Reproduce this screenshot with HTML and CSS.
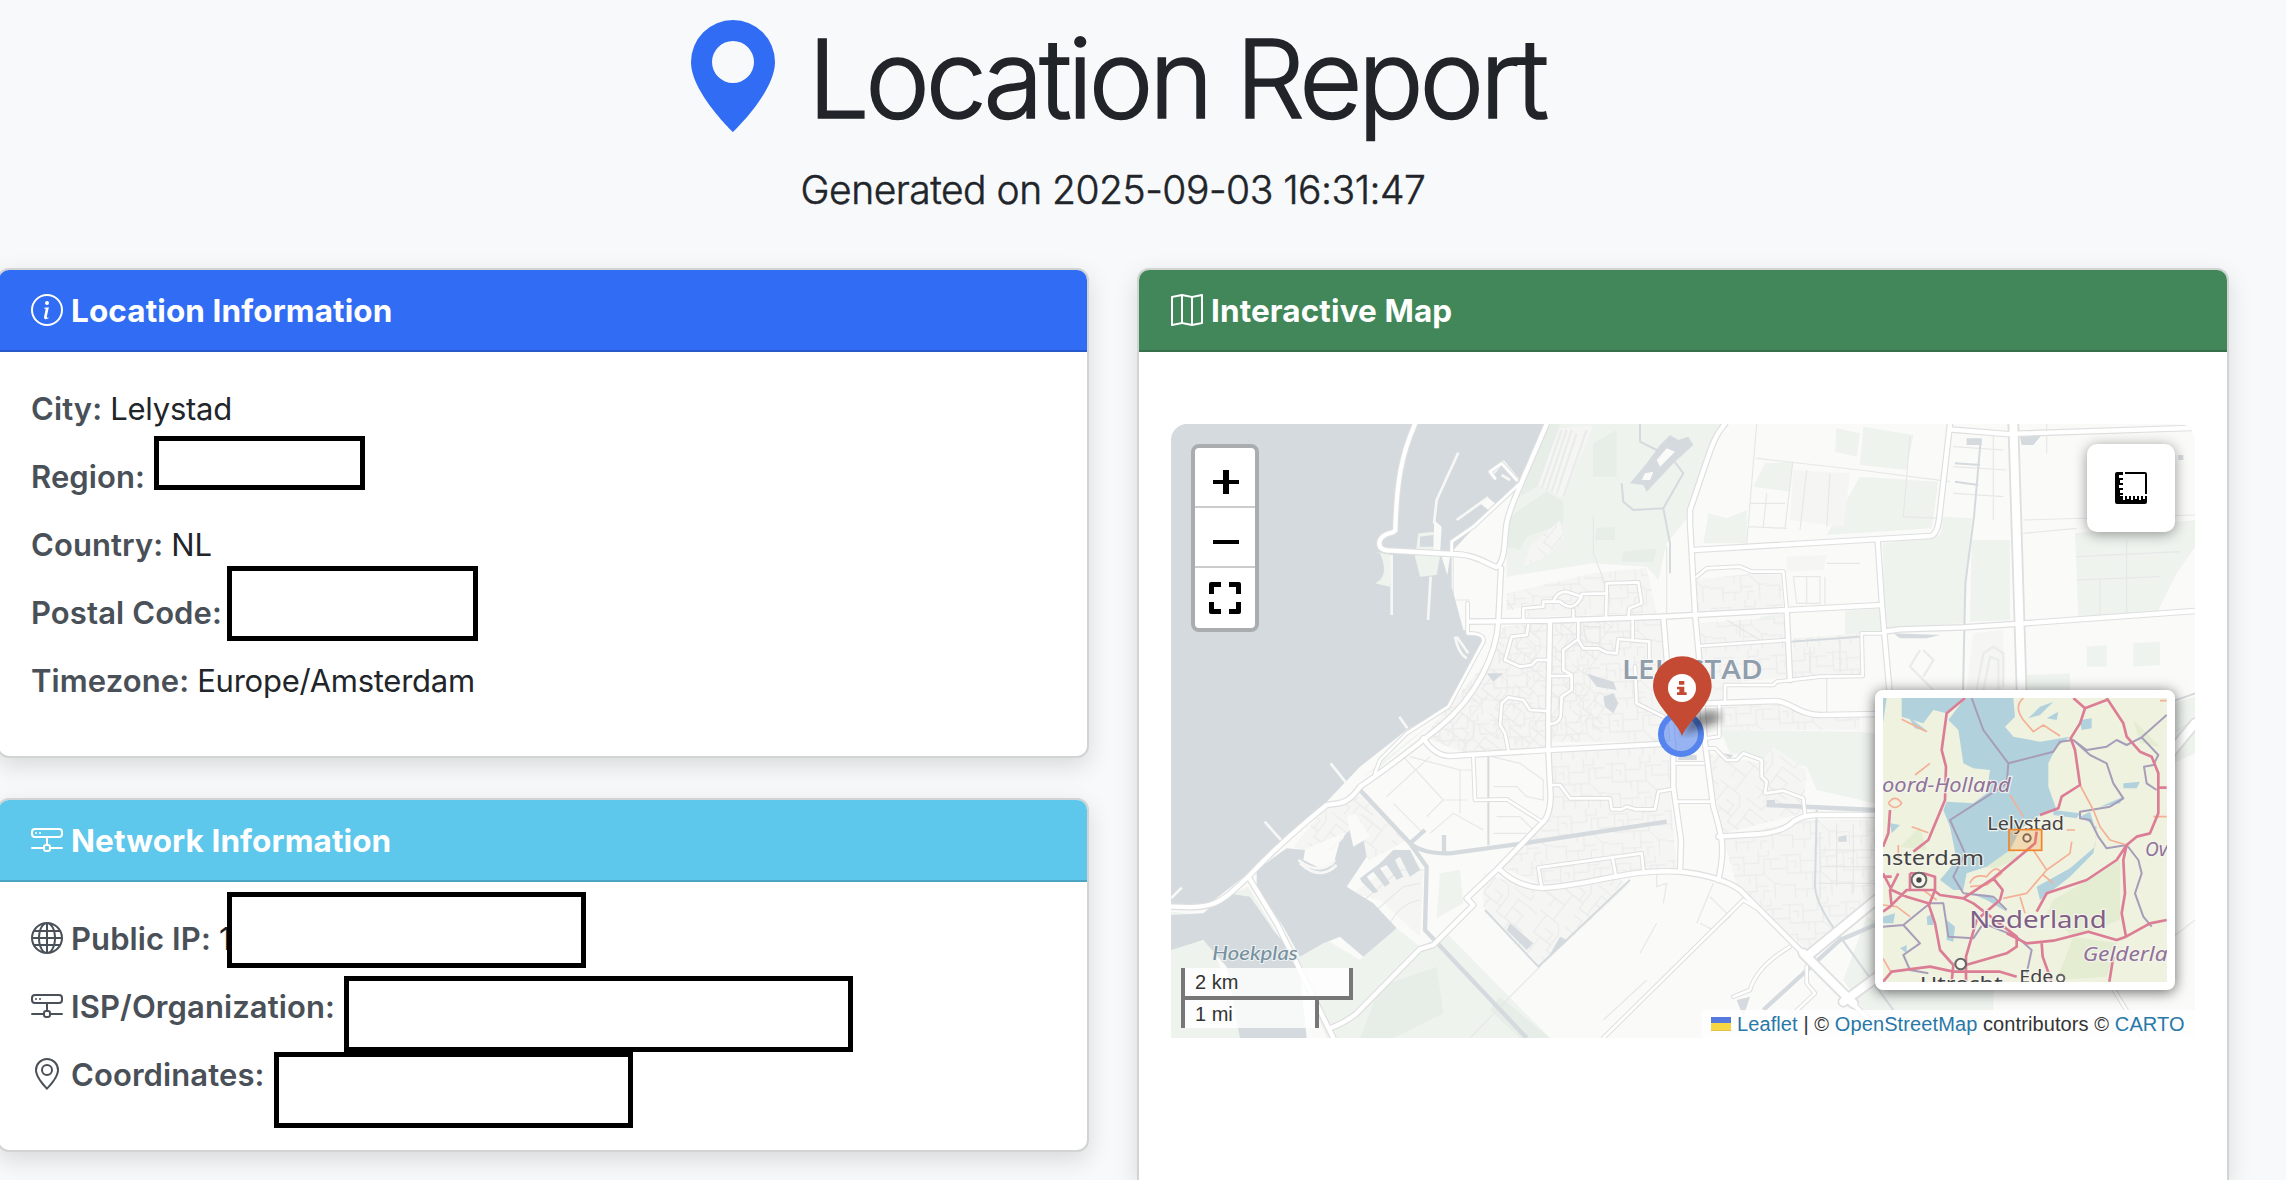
FILE: index.html
```html
<!DOCTYPE html>
<html lang="en">
<head>
<meta charset="utf-8">
<title>Location Report</title>
<link rel="stylesheet" href="styles.css">
</head>
<body>
<svg class="sprite" width="0" height="0" aria-hidden="true">
  <symbol id="i-pin-fill" viewBox="0 0 16 16"><path d="M8 16s6-5.686 6-10A6 6 0 0 0 2 6c0 4.314 6 10 6 10m0-7a3 3 0 1 1 0-6 3 3 0 0 1 0 6"/></symbol>
  <symbol id="i-info" viewBox="0 0 16 16"><path d="M8 15A7 7 0 1 1 8 1a7 7 0 0 1 0 14m0 1A8 8 0 1 0 8 0a8 8 0 0 0 0 16"/><path d="m8.93 6.588-2.29.287-.082.38.45.083c.294.07.352.176.288.469l-.738 3.468c-.194.897.105 1.319.808 1.319.545 0 1.178-.252 1.465-.598l.088-.416c-.2.176-.492.246-.686.246-.275 0-.375-.193-.304-.533zM9 4.5a1 1 0 1 1-2 0 1 1 0 0 1 2 0"/></symbol>
  <symbol id="i-net" viewBox="0 0 16 16"><path d="M4.5 5a.5.5 0 1 0 0-1 .5.5 0 0 0 0 1M3 4.5a.5.5 0 1 1-1 0 .5.5 0 0 1 1 0"/><path d="M0 4a2 2 0 0 1 2-2h12a2 2 0 0 1 2 2v1a2 2 0 0 1-2 2H8.5v3a1.5 1.5 0 0 1 1.5 1.5h5.5a.5.5 0 0 1 0 1H10A1.5 1.5 0 0 1 8.5 14h-1A1.5 1.5 0 0 1 6 12.5H.5a.5.5 0 0 1 0-1H6A1.5 1.5 0 0 1 7.5 10V7H2a2 2 0 0 1-2-2zm1 0v1a1 1 0 0 0 1 1h12a1 1 0 0 0 1-1V4a1 1 0 0 0-1-1H2a1 1 0 0 0-1 1m6 7.5v1a.5.5 0 0 0 .5.5h1a.5.5 0 0 0 .5-.5v-1a.5.5 0 0 0-.5-.5h-1a.5.5 0 0 0-.5.5"/></symbol>
  <symbol id="i-globe" viewBox="0 0 16 16"><path d="M0 8a8 8 0 1 1 16 0A8 8 0 0 1 0 8m7.5-6.923c-.67.204-1.335.82-1.887 1.855A8 8 0 0 0 5.145 4H7.5zM4.09 4a9.3 9.3 0 0 1 .64-1.539 7 7 0 0 1 .597-.933A7.03 7.03 0 0 0 2.255 4zm-.582 3.5c.03-.877.138-1.718.312-2.5H1.674a7 7 0 0 0-.656 2.5zM4.847 5a12.5 12.5 0 0 0-.338 2.5H7.5V5zM8.5 5v2.5h2.99a12.5 12.5 0 0 0-.337-2.5zM4.51 8.5a12.5 12.5 0 0 0 .337 2.5H7.5V8.5zm3.99 0V11h2.653c.187-.765.306-1.608.338-2.5zM5.145 12q.208.58.468 1.068c.552 1.035 1.218 1.65 1.887 1.855V12zm.182 2.472a7 7 0 0 1-.597-.933A9.3 9.3 0 0 1 4.09 12H2.255a7 7 0 0 0 3.072 2.472M3.82 11a13.7 13.7 0 0 1-.312-2.5h-2.49c.062.89.291 1.733.656 2.5zm6.853 3.472A7 7 0 0 0 13.745 12H11.91a9.3 9.3 0 0 1-.64 1.539 7 7 0 0 1-.597.933M8.5 12v2.923c.67-.204 1.335-.82 1.887-1.855q.26-.487.468-1.068zm3.68-1h2.146c.365-.767.594-1.61.656-2.5h-2.49a13.7 13.7 0 0 1-.312 2.5m2.802-3.5a7 7 0 0 0-.656-2.5H12.18c.174.782.282 1.623.312 2.5zM11.27 2.461c.247.464.462.98.64 1.539h1.835a7 7 0 0 0-3.072-2.472c.218.284.418.598.597.933M10.855 4a8 8 0 0 0-.468-1.068C9.835 1.897 9.17 1.282 8.5 1.077V4z"/></symbol>
  <symbol id="i-pin" viewBox="0 0 16 16"><path d="M12.166 8.94c-.524 1.062-1.234 2.12-1.96 3.07A32 32 0 0 1 8 14.58a32 32 0 0 1-2.206-2.57c-.726-.95-1.436-2.008-1.96-3.07C3.304 7.867 3 6.862 3 6a5 5 0 0 1 10 0c0 .862-.305 1.867-.834 2.94M8 16s6-5.686 6-10A6 6 0 0 0 2 6c0 4.314 6 10 6 10"/><path d="M8 8a2 2 0 1 1 0-4 2 2 0 0 1 0 4m0 1a3 3 0 1 0 0-6 3 3 0 0 0 0 6"/></symbol>
  <symbol id="i-map" viewBox="0 0 16 16"><path fill-rule="evenodd" d="M15.817.113A.5.5 0 0 1 16 .5v14a.5.5 0 0 1-.402.49l-5 1a.5.5 0 0 1-.196 0L5.5 15.01l-4.902.98A.5.5 0 0 1 0 15.5v-14a.5.5 0 0 1 .402-.49l5-1a.5.5 0 0 1 .196 0L10.5.99l4.902-.98a.5.5 0 0 1 .415.103M10 1.91l-4-.8v12.98l4 .8zm1 12.98 4-.8V1.11l-4 .8zm-6-.8V1.11l-4 .8v12.98z"/></symbol>
</svg>

<div class="container">
  <header class="page-head">
    <h1 class="title"><svg class="title-icon"><use href="#i-pin-fill"/></svg><span>Location Report</span></h1>
    <p class="generated">Generated on 2025-09-03 16:31:47</p>
  </header>

  <main class="columns">
    <div class="stack">
      <section class="card">
        <h2 class="card-head blue"><svg class="icon"><use href="#i-info"/></svg><span>Location Information</span></h2>
        <div class="card-body">
          <div class="row"><b>City:</b><span>Lelystad</span></div>
          <div class="row"><b>Region:</b><i class="redact r-region"></i></div>
          <div class="row"><b>Country:</b><span>NL</span></div>
          <div class="row"><b>Postal Code:</b><i class="redact r-postal"></i></div>
          <div class="row"><b>Timezone:</b><span>Europe/Amsterdam</span></div>
        </div>
      </section>
      <section class="card">
        <h2 class="card-head cyan"><svg class="icon"><use href="#i-net"/></svg><span>Network Information</span></h2>
        <div class="card-body">
          <div class="row"><svg class="icon"><use href="#i-globe"/></svg><b>Public IP:</b><span>1</span><i class="redact r-ip"></i></div>
          <div class="row"><svg class="icon"><use href="#i-net"/></svg><b>ISP/Organization:</b><i class="redact r-isp"></i></div>
          <div class="row"><svg class="icon"><use href="#i-pin"/></svg><b>Coordinates:</b><i class="redact r-coord"></i></div>
        </div>
      </section>
    </div>

    <section class="card map-card">
      <h2 class="card-head green"><svg class="icon"><use href="#i-map"/></svg><span>Interactive Map</span></h2>
      <div class="map-body">
        <div class="map">
          <svg class="tiles" viewBox="-567 12 3072 1842">
            <defs>
              <pattern id="streets" width="170" height="150" patternUnits="userSpaceOnUse" patternTransform="rotate(-3)">
                <path class="street" d="M0 20H60V75H120M60 40H105V0M20 20V75H60M0 110H40V150M40 125H95V75M120 75V30H170M140 30V60H170M120 75L150 105V150M95 110H130M0 60H20M75 75V100M75 125V150M150 105H170M105 20H135V0M30 40H45V60M135 125H115V150"/>
              </pattern>
              <pattern id="streets2" width="190" height="160" patternUnits="userSpaceOnUse" patternTransform="rotate(38)">
                <path class="street" d="M0 25H70L90 50V110H190M25 25V90H90M50 25V0M50 90V160M0 130H50M120 110V40H190M120 70H160V110M140 110V160M90 20H150V0M75 90V60H45M160 130H190M15 130V160M90 135H120V160"/>
              </pattern>
              <g id="arterial">
                <path d="M165 12C122 110 110 190 106 330C100 345 75 332 60 360C52 385 70 392 95 392L275 402C340 403 360 420 410 442C438 420 432 360 440 310C450 260 480 200 560 12"/>
                <path d="M423 445L415 605C410 700 350 830 240 920C140 1000 60 1060 0 1100C-40 1160 -70 1148 -100 1155C-180 1220 -280 1310 -335 1370C-430 1460 -440 1465 -567 1460"/>
                <path d="M-335 1370L-250 1510L-190 1630L-80 1854"/>
                <path d="M330 605L570 602L910 590L1280 570L1566 555M570 602L565 870V990L572 1130Q570 1190 545 1210L415 1345L320 1435L340 1455L220 1575L180 1587L-10 1780Q-40 1805 -90 1825"/>
                <path d="M190 955Q225 1008 270 1008L565 990L940 970"/>
                <path d="M1095 12C1060 50 1055 80 990 270V310L1006 590L1018 720L1035 970L1060 1160C1090 1260 1095 1290 1075 1380M910 590L922 740L940 1000V1100L963 1260L960 1355"/>
                <path d="M415 1345Q470 1400 545 1404C700 1395 800 1345 960 1355Q1080 1368 1140 1410L1340 1610L1580 1854"/>
                <path d="M1000 390L1711 348Q1730 345 1737 300L1770 12M1553 360L1566 555L1573 640L1590 830M1573 635L1620 628L1809 622L1993 610L2505 573M1770 28L1940 42L2492 24"/>
                <path d="M1280 570L1290 780M1040 850L1250 843C1300 850 1320 888 1390 885L1560 882M1075 1250L1200 1242Q1270 1235 1300 1205Q1330 1185 1370 1185H1560"/>
              </g>
              <g id="motorway">
                <path d="M1960 12L1985 820M1340 1610L1560 1430M1450 1745L1580 1650L2240 1230L2505 910M1330 1600L1480 1750"/>
              </g>
              <g id="local">
                <path d="M370 665L265 860L140 940L60 1020L45 1060M325 640Q375 640 370 665M323 550V640"/>
                <path d="M275 402V365L340 320L480 190M470 180L425 130L390 155L405 175"/>
                <path d="M490 600V565L550 560V545H600Q640 580 665 530L620 515Q590 515 580 545M640 595V570M665 522L740 520V490L835 487L845 550L808 565L805 590M740 520L738 590"/>
                <path d="M655 600V660L670 685H715L740 697L770 700L775 657L868 665V720M818 595V657M655 657L610 690V750L635 765V810L605 830L602 890Q595 912 570 912M570 768H635"/>
                <path d="M505 615L500 645L455 650L435 720L480 740L515 735L530 720H570M445 990L435 940L420 915L425 850L445 832L490 840L510 870L560 873"/>
                <path d="M340 1010L345 1140L440 1138L545 1205M575 1095H600L630 1135H750L755 1168H785L800 1160L825 1168H885L895 1115L940 1107M825 740L830 850L910 890"/>
                <path d="M1040 985H1065L1100 1020H1130L1150 1000L1205 1020V1070L1220 1085L1215 1120L1270 1112L1330 1135L1335 1185M1078 850V950L1040 955M950 1030H1030M950 1145H1060"/>
                <path d="M545 1400L535 1343L845 1300L850 1350M757 1310L768 1370M1270 455H1175L1140 440L1040 445L1010 470M1270 455L1280 570M1020 678L1285 660M1095 840V795L1240 795L1250 785L1380 770L1508 768L1505 640H1573"/>
                <path d="M1150 1440L730 1854M1120 1730L1170 1710Q1190 1640 1290 1580M1340 1640V1690L1365 1720L1280 1800M1150 1440L1190 1465M2250 1690L2350 1854"/>
              </g>
            </defs>
            <rect class="land" x="-567" y="12" width="3072" height="1842"/>
            <path class="park" d="M560 12H1085L985 290L920 370L895 480L860 440L700 430L440 470V300ZM-567 1580L-450 1560L-340 1854H-567ZM-200 1610L-100 1560L0 1620L110 1525L180 1580L260 1540L570 1854H-100ZM-335 1400L-520 1480L-567 1475V1500L-400 1430L-330 1440L-250 1540ZM1568 370L1740 345L1750 290L1835 295L1812 610L1575 625ZM1500 170L1735 185L1715 325L1400 345ZM1510 20L1660 45L1640 150L1500 135ZM1430 25L1500 40L1490 110L1425 95ZM2145 340L2505 300V380L2450 460L2390 580L2155 590ZM1215 130L1298 125L1290 215L1180 200ZM1045 280L1100 295L1160 270V370H1030ZM1835 360H1950V600L1830 605ZM1200 590L1268 582V645L1205 650ZM1455 572L1570 565V640L1455 650ZM1080 930L1500 935L1545 940V1150L1370 1110L1340 1040L1110 1000ZM2000 765L2130 760V810H2000ZM2320 670L2400 665V735L2320 740ZM2180 680L2240 675V740H2180ZM240 1360L300 1350L310 1450L230 1495ZM1520 1490L1900 1650V1854H1570L1450 1680ZM2430 850L2505 830V1000L2440 1030ZM190 960L245 900L265 880L250 905ZM10 1070L150 960L240 890L60 1040ZM650 810L720 805L725 840L640 870Z"/>
            <path class="park2" d="M700 70L770 30V170H700ZM710 325L765 320V360H705ZM790 395L890 385L880 425H785ZM450 290L560 215L610 245V310L500 350L480 390L440 380ZM560 12L600 12L530 200L480 230ZM60 1700L230 1640L250 1780L100 1854H0ZM420 1730L570 1854H480L390 1770Z"/>
            <path class="blocks" d="M340 1010L190 950L400 700L430 620L560 610V990ZM570 610L910 595L930 860L920 965H575ZM575 995L930 980V1100L950 1350L560 1400L420 1340L560 1200ZM1020 610L1270 590L1290 780L1500 770V640L1300 655L1295 770L1095 790V840L1240 835L1380 880H1500V930H1080L1040 940ZM1010 480L1180 460L1265 465L1270 560L1010 575ZM1280 410L1400 405L1390 450L1280 455ZM1090 1250L1340 1200H1545V1430L1340 1590L1130 1395ZM1040 1000L1200 1030L1240 980L1340 1050L1330 1180L1090 1240ZM440 520L700 460L860 445L890 580L500 590V560L440 570ZM1300 150L1470 160L1450 320L1290 300ZM370 1360L540 1410L780 1375L800 1400L540 1640L370 1460ZM1840 640L1930 630V810H1820ZM-200 1280L-110 1170L20 1120L140 1260L30 1320L-50 1240L-170 1290ZM-20 1420L150 1290L190 1360L180 1550L60 1440ZM510 380L600 300L610 350L560 410L490 440ZM530 190L600 25L700 15L610 235Z"/>
            <path class="tex" d="M340 1010L190 950L400 700L430 620L560 610V990ZM1020 610L1270 590L1290 780L1500 770V640L1300 655L1295 770L1095 790V840L1240 835L1380 880H1500V930H1080L1040 940ZM1010 480L1180 460L1265 465L1270 560L1010 575ZM1090 1250L1340 1200H1545V1430L1340 1590L1130 1395ZM575 995L930 980V1100L950 1350L560 1400L420 1340L560 1200ZM440 520L700 460L860 445L890 580L500 590V560L440 570ZM570 610L910 595L930 860L920 965H575Z"/>
            <path class="tex2" d="M1040 1000L1200 1030L1240 980L1340 1050L1330 1180L1090 1240ZM370 1360L540 1410L780 1375L800 1400L540 1640L370 1460ZM-200 1280L-110 1170L20 1120L140 1260L30 1320L-50 1240L-170 1290ZM340 1010L190 950L400 700L430 620L560 610V990ZM570 610L760 603L740 860L720 965H575ZM510 380L600 300L610 350L560 410L490 440Z"/>
            <path class="lane" d="M130 1010L250 1140L200 1190M80 1130L210 1010M100 1150L190 1240M150 1010L300 1050V1180M250 1140L320 1140M300 1050H340M210 1240L280 1180L370 1230M395 1010L480 1030L550 1080V1140L500 1130L470 1100H400M410 1190H480L520 1230M400 1240H500M0 1450L120 1350L190 1350M50 1470L130 1400L180 1390M90 1510Q120 1450 180 1440M1190 12L1160 370M1190 115L1500 150L1770 185M1298 128L1275 325M1340 150L1320 330M1410 160L1400 320M1170 250H1275M1220 220L1210 320M1165 320L1280 325M1650 50L1630 290L1740 295M1780 80L1930 90M1780 140L1940 150M1780 220L1930 230M1900 40V300M1990 300L2505 285M1990 340L2150 325M2300 360V580M2150 410L2460 395M2150 480L2400 470M2220 480V590M1550 1010H1700M1550 1060H1690M1380 1240V1440M1430 1210V1400M1480 1210V1420M1380 1290H1545M1380 1340H1545M1380 1390H1545M860 1680L730 1800M890 1510L840 1600M540 1640L440 1740L330 1854M1060 1390L1010 1510M1020 1510L1060 1530L1110 1490L1050 1430M890 1360V1400L920 1390L910 1450M2400 960L2505 900M2400 1580L2505 1500M1300 470H1380V550H1310ZM1340 470V550M1395 470V560M1400 430H1500M670 620H720V670L680 665ZM1140 600V650M1200 660L1100 600M1350 680V760M1400 770V880M1440 660V760M700 290V400L735 490M920 380V600M280 410V540H330M440 540L460 570M2060 0V100"/>
            <path class="lane thick" d="M1680 690L1650 740L1720 810M1690 690L1720 720L1690 770M1850 810L1870 700L1900 680L1930 700V800M1870 810L1890 710L1915 720V810M590 30L530 200M605 30L545 205M620 30L560 210M635 30L575 215M650 40L590 220M680 30L610 230"/>
            <path class="water" d="M-567 12H555L480 190L355 310L275 395V500L310 630L360 640Q378 670 360 690L265 860L140 930L0 1040L-100 1145L-240 1270L-335 1360L-450 1450L-567 1458ZM-310 1350L-220 1285L-165 1290L-170 1320L-120 1345L-80 1335L-60 1260L0 1200L20 1310L-40 1400L40 1450L110 1525L10 1610L-60 1550L-110 1570L-180 1610L-230 1520L-310 1400ZM-567 1485L-470 1480L-400 1420L-330 1430L-260 1530L-210 1590L-180 1660L-160 1854H-360L-400 1640L-470 1560L-567 1590Z"/>
            <path class="water" d="M900 75L930 45L955 60L985 50L1000 75L940 130L860 215L850 195L810 190L860 130ZM0 1375L60 1330L100 1290L150 1290L180 1350L150 1370L120 1310L105 1320L130 1370L110 1380L80 1335L60 1345L90 1390L75 1400L40 1355L20 1370L55 1415L40 1420L5 1385ZM680 760L710 770L760 785L770 810L710 800ZM730 830L760 820L775 850L760 880L735 860ZM380 760H430L400 785ZM450 1510L520 1570L500 1590L440 1530ZM560 1620L600 1550L620 1560L580 1600ZM1220 1140H1245V1160H1220ZM1435 1250L1460 1245V1265H1435ZM1130 1740L1170 1730L1150 1790ZM1820 55H1865V75H1820ZM1600 640L1740 645L1700 655H1620ZM1090 1000L1120 1005L1110 1015ZM2455 105H2470V120H2455ZM955 1005H1010V1020H955ZM1980 50L2045 45L2020 75H1985Z"/>
            <path class="park" d="M175 340L225 335V405L240 410L230 465L180 470L165 410ZM180 350V380H220V345ZM45 395L95 405L90 500L45 490Q90 470 60 400Z" fill-rule="evenodd"/>
            <path class="land" d="M920 85L945 95L900 140L890 120ZM855 160L880 155L870 180H845ZM380 230L405 250L385 270L360 250ZM222 300L245 320L240 405H222ZM245 410H270L262 465ZM-40 1190L-15 1180L30 1250L-20 1280Z"/>
            <path class="pier" d="M295 98L230 240L222 310M212 470L204 600M95 405V585M385 232L290 300M285 650Q295 700 320 715M290 650L325 700M118 890L142 925M-88 1030L-40 1090M-286 1205L-235 1262M-185 1320Q-120 1370 -75 1320M-180 1330Q-120 1385 -70 1335M-90 1290L-50 1250M-567 1435L-535 1403M395 165L430 125L475 180M425 165L450 180"/>
            <path class="canal" d="M0 1110L150 1270Q190 1302 270 1300L490 1270L920 1205M150 1270L200 1340L195 1530L500 1854M150 1270L195 1230M252 1300V1245M1220 1155L1545 1170M1545 1515L1440 1560L1210 1770"/>
            <path class="canal thin" d="M1862 60L1842 290L1816 490L1809 820M385 1010V1275M1370 1170L1365 1400Q1370 1460 1440 1550L1600 1770M1785 130L1860 135M1785 185L1855 195M375 1470L535 1640L810 1380M840 12V65L890 90M785 190L790 245L820 270L910 265L970 160L940 120M910 265L930 370V460M1290 665L1500 650M2420 850L2505 820"/>
            <use href="#local" class="case-local"/><use href="#arterial" class="case-art"/><use href="#motorway" class="case-mot"/>
            <use href="#local" class="fill-local"/><use href="#arterial" class="fill-art"/><use href="#motorway" class="fill-mot"/>
            <text class="town" x="786" y="777" textLength="422" lengthAdjust="spacingAndGlyphs">LELYSTAD</text>
            <text class="lake" x="-443" y="1620" textLength="256" lengthAdjust="spacingAndGlyphs">Hoekplas</text>
            <circle class="spot" cx="963" cy="942" r="60"/>
            <filter id="soft"><feGaussianBlur stdDeviation="12"/></filter>
            <path class="shade" filter="url(#soft)" d="M966 945L1000 885Q1040 865 1080 880Q1095 900 1050 915Z"/>
            <path class="marker" d="M966 948C950 900 879 855 879 797A88 88 0 0 1 1055 797C1055 855 985 900 966 948Z"/>
            <circle class="marker-dot" cx="966" cy="804" r="42"/>
            <path class="marker" d="M957 783H973V794H957ZM951 800H973V817H980V825H951V817H958V808H951Z"/>
          </svg>

          <div class="zoom">
            <div class="zoom-btn"><svg width="26" height="26" viewBox="0 0 26 26"><path d="M0 11H10V1H16V11H26V15H16V25H10V15H0Z"/></svg></div>
            <div class="zoom-btn"><svg width="26" height="26" viewBox="0 0 26 26"><path d="M0 11H26V15H0Z"/></svg></div>
            <div class="zoom-btn"><svg width="32" height="32" viewBox="0 0 32 32"><path d="M0 12V2Q0 0 2 0H12V5H5V12ZM20 0H30Q32 0 32 2V12H27V5H20ZM0 20H5V27H12V32H2Q0 32 0 30ZM27 20H32V30Q32 32 30 32H20V27H27Z"/></svg></div>
          </div>

          <div class="measure"><svg width="32" height="32" viewBox="0 0 32 32"><path fill-rule="evenodd" d="M0 2Q0 0 2 0H8V3H4V6H8V8H5V11H8V13H4V16H8V18H5V21H8V23H5V24H8V28H10V24H12V27H14V24H16V28H18V24H20V27H22V24H24V28H26V24H28V27H30V24H32V30Q32 32 30 32H2Q0 32 0 30ZM10 0H30Q32 0 32 2V22H30V2H10Z"/></svg></div>

          <div class="scale">
            <div class="scale-km">2 km</div>
            <div class="scale-mi">1 mi</div>
          </div>

          <div class="minimap">
            <svg viewBox="129 114 852 852" width="284" height="284">
              <rect class="m-land" x="129" y="114" width="852" height="852"/>
              <path class="m-green" d="M640 720L780 640L840 600V780L700 830L620 760ZM400 620L510 560L540 590L470 625ZM700 830L830 850L800 950L650 960ZM180 560L240 500L260 570ZM880 180L960 260L900 250Z"/>
              <path class="m-water" d="M185 114H370L320 160L280 150L250 190L185 170ZM375 114H520L525 170L495 200L520 230L600 245L690 230L650 260L625 310V380L650 450L600 465L540 510L510 570L440 620L380 640L370 690L340 690L300 660L350 600L330 500L310 450L320 425L400 430L440 400L450 330L400 325L370 310L355 210L325 180ZM720 180L755 175V205L725 210ZM565 175L600 140L640 125L600 165ZM620 175L655 155L650 180ZM390 700L450 705L500 755L440 720ZM590 680L690 625L765 560L770 500L720 470L750 455L770 520L760 580L690 650L600 720ZM640 450L720 460L710 475L640 465ZM780 440L850 410L840 430ZM850 370L900 365L890 385H850ZM320 780L345 800L340 845L320 840ZM129 770L165 760L160 790H129ZM260 770L280 760V795H262ZM180 865L200 855V880ZM129 190L140 114H129ZM150 490L180 495L155 520ZM205 170L265 215L225 205Z"/>
              <path class="m-admin" d="M395 114L430 210L505 310L640 275L660 245L700 240L740 270L800 260L830 240L860 255L905 232L980 165M905 232L955 285L940 315L912 320L920 370L950 390M700 240L750 285L800 310L820 370L850 415L810 440L720 455V475L750 480L775 530L800 565L860 555L895 600L905 640L885 700L910 770L935 800M505 310L500 370L440 410L330 480L375 580L340 650L370 700M370 700L460 710L500 750M129 800L190 795L270 730L310 730L325 830L400 835L430 790L530 830L575 870L560 940M190 795L240 850L190 885L210 930L265 940"/>
              <path class="m-orange" d="M185 178L260 215M225 345L270 310M215 500L265 518M145 430Q165 400 185 430Q165 455 145 430M510 405L550 470M550 114Q520 140 550 180L580 215L610 195L660 228M720 375L760 450L780 500L810 540L860 555M580 570L620 630L690 580L695 545M620 630L560 700L490 715M390 670Q400 640 440 650Q470 610 485 640L440 675L390 680M540 710L555 760M175 555V600M129 735L170 740L210 770M129 895L155 940M680 510H705M610 645L640 670M940 470H980M250 690L290 720M960 122H980"/>
              <path class="m-road" d="M375 114L320 160L305 270L318 320L315 420L265 540L220 575M150 450L145 520L129 560M700 114L735 145L800 120M735 145L720 190L692 235L705 270L720 375L665 410L655 445L600 465M800 114L850 190L860 230L900 275L935 290L955 340V460L930 520L890 530L860 555L830 600L740 660L620 700L590 755M860 555L850 600L855 700L845 760L858 830M980 780L930 790L858 830L830 840L745 815L640 842L560 850L500 820M590 515L585 550L460 655L370 715L300 705L280 690L200 690L150 740L129 755M460 655L488 690L480 720L410 780L378 890V965M370 715L400 730L530 830V860L500 880L378 915M265 730L285 790L300 870L340 915L335 965M265 730L200 710L155 690L129 640M210 640H250L285 650V690L265 740M175 640L150 690L155 740M210 640V690M129 965L155 935L270 920L340 935L480 935L530 950M605 850L608 890L635 965M820 890L808 965M955 383H980M129 650H155"/>
              <g class="m-dots"><circle cx="237" cy="660" r="22"/><circle cx="362" cy="912" r="16"/><circle cx="662" cy="955" r="11"/><circle cx="561" cy="534" r="11"/></g>
              <circle cx="237" cy="660" r="8" fill="#444"/>
              <text class="m-region" x="126" y="396" font-size="58" textLength="386" lengthAdjust="spacingAndGlyphs">oord-Holland</text>
              <text class="m-city" x="442" y="511" font-size="56" textLength="230" lengthAdjust="spacingAndGlyphs">Lelystad</text>
              <text class="m-city" x="90" y="616" font-size="60" textLength="342" lengthAdjust="spacingAndGlyphs">msterdam</text>
              <text class="m-country" x="388" y="803" font-size="72" textLength="412" lengthAdjust="spacingAndGlyphs">Nederland</text>
              <text class="m-region" x="915" y="588" font-size="57">Ov</text>
              <text class="m-region" x="728" y="903" font-size="58" textLength="255" lengthAdjust="spacingAndGlyphs">Gelderla</text>
              <text class="m-city" x="240" y="992" font-size="60" textLength="248" lengthAdjust="spacingAndGlyphs">Utrecht</text>
              <text class="m-city" x="538" y="970" font-size="52" textLength="102" lengthAdjust="spacingAndGlyphs">Ede</text>
              <rect class="m-view" x="507" y="509" width="98" height="62"/>
            </svg>
          </div>

          <div class="credit"><svg width="20" height="14" viewBox="0 0 20 14"><rect width="20" height="6" fill="#5579dc"/><rect y="6" width="20" height="8" fill="#f6d743"/><rect y="13" width="20" height="1" fill="#dcc14a"/></svg><span><a>Leaflet</a> | © <a>OpenStreetMap</a> contributors © <a>CARTO</a></span></div>
        </div>
      </div>
    </section>
  </main>
</div>
</body>
</html>
```
FILE: styles.css
```css
* { box-sizing: border-box; }
html, body { height: 1180px; overflow: hidden; }
body { margin: 0; background: #f8f9fb; color: #212529; font-family: Inter, "Liberation Sans", sans-serif; }
.sprite { display: block; width: 0; height: 0; }
.container { width: 2232px; margin-left: -3px; padding-top: 11px; }

.page-head { height: 257px; text-align: center; }
.title { margin: 0; height: 134px; padding-right: 4px; display: flex; justify-content: center; align-items: flex-start; gap: 19px; font-size: 109px; line-height: 134px; font-weight: 300; letter-spacing: -4.2px; -webkit-text-stroke: 1.6px currentColor; white-space: nowrap; }
.title-icon { width: 112px; height: 112px; margin-top: 9px; fill: #316cf4; }
.generated { margin: 15px 0 0; font-size: 39px; line-height: 60px; font-weight: 300; letter-spacing: -.5px; -webkit-text-stroke: .5px currentColor; }

.columns { display: grid; grid-template-columns: 1092px 1092px; gap: 48px; align-items: start; }
.stack { display: flex; flex-direction: column; gap: 40px; }
.card { border: 2px solid #d2d3d3; border-radius: 12px; background: #fff; box-shadow: 0 8px 24px rgba(0, 0, 0, .13); }
.card-head { margin: 0; height: 82px; padding: 0 32px; display: flex; align-items: center; gap: 8px; border-radius: 10px 10px 0 0; border-bottom: 2px solid; color: #fff; font-size: 31.5px; font-weight: 700; letter-spacing: .1px; }
.icon { width: 32px; height: 32px; flex: none; fill: currentColor; }
.blue { background: #316cf4; border-color: #2759ca; }
.cyan { background: #5dc7ec; border-color: #4ca4c3; }
.green { background: #418759; border-color: #366f49; }

.card-body { padding: 22px 32px 42px; }
.row { position: relative; height: 68px; display: flex; align-items: center; gap: 8px; font-size: 31px; letter-spacing: -.25px; white-space: nowrap; }
.row b { color: #495057; font-weight: 600; letter-spacing: .1px; }
.row .icon { color: #495057; }
.redact { position: absolute; background: #fff; border: 5px solid #000; }
.r-region { left: 123px; top: -6px; width: 211px; height: 54px; }
.r-postal { left: 196px; top: -12px; width: 251px; height: 75px; }
.r-ip { left: 196px; top: -12px; width: 359px; height: 76px; }
.r-isp { left: 313px; top: 4px; width: 509px; height: 76px; }
.r-coord { left: 243px; top: 12px; width: 359px; height: 76px; }

.map-card { height: 912px; border-bottom: 0; border-radius: 12px 12px 0 0; }
.map-body { padding: 72px 32px; }
.map { position: relative; width: 1024px; height: 614px; border-radius: 16px 16px 0 0; overflow: hidden; font-family: "Liberation Sans", Arial, sans-serif; font-size: 20px; color: #333; }
.tiles { display: block; width: 1024px; height: 614px; }
.land { fill: #fafaf8; }
.park { fill: #eef3ee; }
.park2 { fill: #e6eee7; }
.blocks { fill: #f5f5f4; }
.tex { fill: url(#streets); }
.tex2 { fill: url(#streets2); }
.street { fill: none; stroke: #eaeaea; stroke-width: 3; }
.lane { fill: none; stroke: #e6e7e7; stroke-width: 3.5; }
.thick { stroke-width: 7; stroke: #eaebeb; }
.water { fill: #d4dadd; }
.pier { fill: none; stroke: #f7f8f6; stroke-width: 8; stroke-linejoin: round; }
.canal { fill: none; stroke: #d4dadd; stroke-width: 13; stroke-linejoin: round; }
.thin { stroke-width: 6; }
.case-local, .case-art, .case-mot, .fill-local, .fill-art, .fill-mot { fill: none; stroke-linejoin: round; stroke-linecap: round; }
.case-local, .case-art, .case-mot { stroke: #dedfdf; }
.case-local { stroke-width: 14; }
.case-art { stroke-width: 20; }
.case-mot { stroke-width: 35; }
.fill-local, .fill-art, .fill-mot { stroke: #fff; }
.fill-local { stroke-width: 8; }
.fill-art { stroke-width: 13; }
.fill-mot { stroke-width: 24; }
.town { font: 600 80px "Open Sans", "Noto Sans", sans-serif; fill: #909dab; stroke: #f7f7f7; stroke-width: 6; paint-order: stroke; }
.lake { font: italic 500 58px Lato, "Noto Sans", sans-serif; fill: #7891a0; stroke: #eef1f1; stroke-width: 6; paint-order: stroke; }
.spot { fill: #5584ee; fill-opacity: .6; stroke: #5584ee; stroke-width: 18; }
.shade { fill: #000; opacity: .45; }
.marker { fill: #c44a34; }
.marker-dot { fill: #fff; }

.zoom { position: absolute; left: 20px; top: 20px; width: 68px; height: 188px; border: 4px solid #a9adaf; border-radius: 8px; background: #fff; display: grid; grid-template-rows: 60px 60px 60px; }
.zoom-btn { display: flex; align-items: center; justify-content: center; border-bottom: 2px solid #ccc; }
.zoom-btn:nth-child(-n+2) { padding: 10px 0 0 1px; }
.zoom-btn:last-child { border: 0; }
.measure { position: absolute; right: 20px; top: 20px; width: 88px; height: 88px; border-radius: 10px; background: #fff; box-shadow: 0 2px 14px rgba(0, 0, 0, .4); display: flex; align-items: center; justify-content: center; }
.scale { position: absolute; left: 10px; top: 544px; line-height: 29px; }
.scale div { border: 4px solid #777; border-top: 0; background: rgba(255, 255, 255, .8); padding-left: 10px; }
.scale-km { width: 172px; height: 32px; }
.scale .scale-mi { width: 138px; height: 28px; border-bottom: 0; }
.minimap { position: absolute; left: 704px; top: 266px; width: 300px; height: 300px; border: 8px solid #fff; border-radius: 8px; box-shadow: 0 2px 14px rgba(0, 0, 0, .6); background: #fff; }
.minimap svg { display: block; }
.m-land { fill: #eff2df; }
.m-green { fill: #e4ecd2; }
.m-water { fill: #b1d2dd; }
.m-admin { fill: none; stroke: #a79db9; stroke-width: 6; stroke-linejoin: round; }
.m-orange { fill: none; stroke: #f4b096; stroke-width: 5; stroke-linejoin: round; }
.m-road { fill: none; stroke: #dc7d96; stroke-width: 8; stroke-linejoin: round; }
.m-dots { fill: #f7f7f0; stroke: #666; stroke-width: 6; }
.minimap text { font-family: "Noto Sans", sans-serif; font-weight: 400; stroke: #f6f5ee; stroke-width: 7; paint-order: stroke; stroke-opacity: .85; }
.minimap .m-region { fill: #8f7398; font-style: italic; }
.m-city { fill: #444; }
.m-country { fill: #7f5f86; }
.m-view { fill: #ff7800; fill-opacity: .2; stroke: #f08428; stroke-width: 5; }
.credit { position: absolute; right: 0; bottom: 0; height: 28px; width: 484px; background: rgba(255, 255, 255, .8); box-shadow: -9px 0 0 rgba(255, 255, 255, .8); display: flex; align-items: center; gap: 6px; line-height: 28px; letter-spacing: .1px; white-space: nowrap; }
.credit a { color: #2878a8; }
```
